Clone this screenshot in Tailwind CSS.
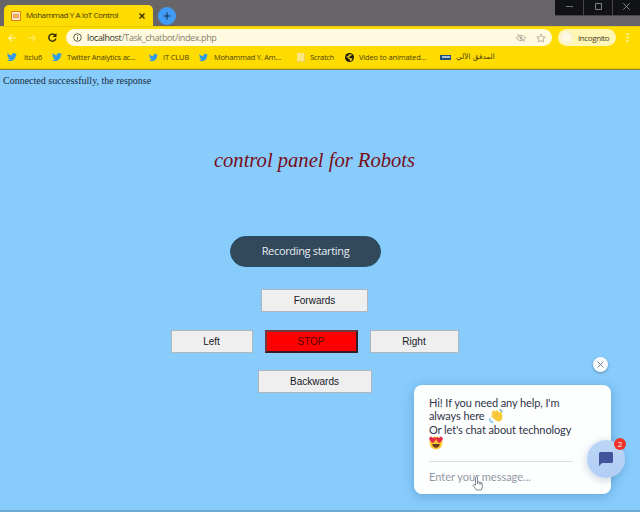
<!DOCTYPE html>
<html lang="en">
<head>
<meta charset="utf-8">
<title>Mohammad Y A IoT Control</title>
<script src="https://cdn.jsdelivr.net/npm/@tailwindcss/browser@4"></script>
</head>
<body class="w-[640px] h-[512px] overflow-hidden bg-[#88ccfc] font-['Open_Sans','Noto_Sans',sans-serif] flex flex-col">
<svg class="hidden">
  <symbol id="bird" viewBox="0 0 24 24"><path fill="#319be8" d="M24 4.6a10 10 0 0 1-2.8.8 5 5 0 0 0 2.1-2.7 10 10 0 0 1-3.1 1.2 4.9 4.9 0 0 0-8.4 4.5A14 14 0 0 1 1.7 3.1a4.9 4.9 0 0 0 1.5 6.6 5 5 0 0 1-2.2-.6 4.9 4.9 0 0 0 3.9 4.9 5 5 0 0 1-2.2.1 4.9 4.9 0 0 0 4.6 3.4A10 10 0 0 1 0 19.5 14 14 0 0 0 21.5 7.1 10 10 0 0 0 24 4.6z"/></symbol>
</svg>

<!-- Tab strip -->
<div class="h-[26px] shrink-0 bg-[#686569] flex justify-between">
  <div class="flex pl-[4px]">
    <div class="mt-[5px] w-[149px] h-[21px] bg-[#ffdc00] rounded-t-[5px] flex items-center pl-[7px]">
      <svg class="w-[10px] h-[10px] shrink-0" viewBox="0 0 10 10"><rect width="10" height="10" rx="1.5" fill="#e9781e"/><rect x="1" y="1" width="8" height="8" rx="1" fill="#fff3d9"/><path d="M2.900 2.600C4 2.600 4.200 4 5 4s1-1.400 2.100-1.400M2.900 7.400C4 7.400 4.200 6 5 6s1 1.400 2.100 1.400M2.700 3v4M7.300 3v4M3.500 5h3" fill="none" stroke="#e9781e" stroke-width="1"/></svg>
      <span class="ml-[5px] w-[113px] text-[8px] leading-[12px] -mt-px whitespace-nowrap text-[#3c3400] tracking-[-0.43px]"><span class="tracking-[-0.43px]">Mohammad Y A IoT Control</span></span>
      <svg class="w-[6px] h-[6px] shrink-0" viewBox="0 0 5 5"><path d="M.4.4l4.200 4.200M4.600.4L.4 4.600" stroke="#332c00" stroke-width="1.100"/></svg>
    </div>
    <div class="mt-[7px] ml-[5px] size-[18px] rounded-full bg-[#419bf4] flex items-center justify-center">
      <svg class="size-[8px]" viewBox="0 0 8 8"><path d="M4 .5v7M.5 4h7" stroke="#15395e" stroke-width="1.200"/></svg>
    </div>
  </div>
  <div class="w-[85px] h-[16px] grid grid-cols-[28px_28px_27px] gap-x-px bg-[#47464a] border-b border-[#47464a]">
    <div class="bg-[#101216] flex items-center justify-center"><svg class="size-[7px] mt-[-2px]" viewBox="0 0 7 7"><path d="M0 3.500h7" stroke="#707276"/></svg></div>
    <div class="bg-[#101216] flex items-center justify-center"><svg class="size-[7px] mt-[-2px]" viewBox="0 0 7 7"><path d="M.5.5h6v6h-6z" fill="none" stroke="#808286"/></svg></div>
    <div class="bg-[#101216] flex items-center justify-center"><svg class="size-[7px] mt-[-2px]" viewBox="0 0 7 7"><path d="M.3.3l6.400 6.400M6.700.3L.3 6.700" stroke="#909296" stroke-width=".9"/></svg></div>
  </div>
</div>

<!-- Toolbar -->
<div class="h-[22px] shrink-0 bg-[#ffdc00] flex items-center border-t border-[#e9ca06]">
  <svg class="ml-[8px] w-[8px] h-[8px]" viewBox="0 0 8 8"><path d="M8 4H1M4 .7L.7 4 4 7.300" fill="none" stroke="#fff7bd" stroke-width="1.100"/></svg>
  <svg class="ml-[12px] w-[8px] h-[8px]" viewBox="0 0 8 8"><path d="M0 4h7M4 .7L7.300 4 4 7.300" fill="none" stroke="#ffed7c" stroke-width="1"/></svg>
  <svg class="ml-[12px] w-[9px] h-[9px]" viewBox="0 0 9 9"><path d="M7.300 2.400A3.600 3.600 0 1 0 7.900 5.500" fill="none" stroke="#332c00" stroke-width="1.400"/><path d="M8.500 0v4h-4z" fill="#332c00"/></svg>
  <div class="ml-[9px] w-[486px] h-[17px] rounded-full bg-[#fffae0] flex items-center pl-[7px]">
    <svg class="size-[9px]" viewBox="0 0 9 9"><circle cx="4.500" cy="4.500" r="3.800" fill="none" stroke="#625e4f"/><path d="M4.500 4v2.700M4.500 2.200v1" stroke="#625e4f"/></svg>
    <span class="ml-[5px] w-[429px] text-[9px] leading-[14px] whitespace-nowrap tracking-[-0.37px] text-[#85806c]"><span class="text-[#35322a]">localhost</span>/Task_chatbot/index.php</span>
    <svg class="size-[10px]" viewBox="0 0 10 10"><path d="M.5 5C2.500 1.500 7.500 1.500 9.500 5 7.500 8.500 2.500 8.500.5 5zM1.500 1l7.500 8" fill="none" stroke="#b1ac9d"/><circle cx="5" cy="5" r="1.500" fill="#b1ac9d"/></svg>
    <svg class="ml-[10px] size-[10px]" viewBox="0 0 10 10"><path d="M5 1l1.200 2.700 3 .3L7 6l.6 3L5 7.500 2.400 9 3 6 .8 4l3-.3z" fill="none" stroke="#b1ac9d" stroke-width=".9"/></svg>
  </div>
  <div class="ml-[6px] w-[58px] h-[17px] rounded-full bg-[#fff5b5] flex items-center pl-[2px]">
    <svg class="size-[13px]" viewBox="0 0 13 13"><circle cx="6.500" cy="6.500" r="6.500" fill="#f9f3d3"/><path d="M2.500 6h8M4 5l1-2h3l1 2" fill="none" stroke="#fff"/><circle cx="4.500" cy="8.500" r="1.300" fill="none" stroke="#fff" stroke-width=".8"/><circle cx="8.500" cy="8.500" r="1.300" fill="none" stroke="#fff" stroke-width=".8"/></svg>
    <span class="ml-[5px] text-[8px] leading-[12px] text-[#454029] tracking-[-0.4px]">Incognito</span>
  </div>
  <svg class="ml-[10px] w-[3px] h-[9px]" viewBox="0 0 3 9"><path d="M.5 0h2v2h-2zM.5 3.500h2v2h-2zM.5 7h2v2h-2z" fill="#fff4a8"/></svg>
</div>

<!-- Bookmarks -->
<div class="h-[22px] shrink-0 bg-[#ffdc00] border-b border-[#8d8335] shadow-[inset_0_-1px_0_#e2c400] flex items-center pl-[7px] pb-[3px] text-[7.500px] leading-[12px] text-[#4a4000] whitespace-nowrap">
  <div class="w-[45px] flex items-center gap-[7px]"><svg class="size-[10px]"><use href="#bird"/></svg><span class="tracking-[-0.15px]">itclu6</span></div>
  <div class="w-[97px] flex items-center gap-[5px]"><svg class="size-[10px]"><use href="#bird"/></svg><span class="tracking-[-0.2px]">Twitter Analytics ac...</span></div>
  <div class="w-[50px] flex items-center gap-[5px]"><svg class="size-[9px]"><use href="#bird"/></svg><span class="tracking-[-0.15px]">IT CLUB</span></div>
  <div class="w-[98px] flex items-center gap-[6px]"><svg class="size-[9px]"><use href="#bird"/></svg><span class="tracking-[-0.2px]">Mohammad Y. Am...</span></div>
  <div class="w-[48px] flex items-center gap-[5px]"><span class="w-[8px] h-[9px] bg-[#fbe783] border-r border-b border-[#e9ce57] rounded-[1px]"></span><span class="tracking-[-0.25px]">Scratch</span></div>
  <div class="w-[95px] flex items-center gap-[5px]"><svg class="size-[9px]" viewBox="0 0 9 9"><circle cx="4.500" cy="4.500" r="4.500" fill="#211d00"/><path d="M1 3l2 .2.700-1.500L6 1l.8 1-1 1.300-2 .5 1 1.200 2.700.5-.8 2-1.700.7-.3-1.700L3 5.300z" fill="#e1c822"/></svg><span class="tracking-[-0.14px]">Video to animated...</span></div>
  <div class="flex items-center gap-[5px]"><span class="w-[11px] h-[5px] bg-[#1e4d7b] flex items-center justify-center"><span class="w-[8px] h-[2px] bg-[#a8c0d3]"></span></span><span dir="rtl" class="font-['DejaVu_Sans','Noto_Sans',sans-serif] text-[7.300px]">المدقق الآلي</span></div>
</div>

<!-- Page -->
<main class="relative flex-1 -mt-px border-b-2 border-[#70abd5]">
  <p class="pl-[3px] pt-[5px] font-['Liberation_Serif',serif] text-[10px] leading-[13px] text-[#172b3b] whitespace-nowrap">Connected successfully, the response</p>
  <h1 class="mt-[61px] pr-[11px] text-center font-['Liberation_Serif',serif] italic text-[20.600px] leading-[24px] text-[#790d1a]">control panel for Robots</h1>
  <div class="mt-[64px] ml-[230px] w-[151px] h-[31px] rounded-full bg-[#31495b] border border-[#284d67] flex items-center justify-center text-[11px] tracking-[-0.33px] text-[#e7edf4]">Recording starting</div>
  <div class="mt-[22px] w-[629px] flex flex-col items-center gap-[18px] font-['Liberation_Sans',sans-serif] text-[10px] leading-[12px] text-[#17171f]">
    <button class="w-[107px] h-[23px] bg-[#efeff0] border border-[#aeb7bf]">Forwards</button>
    <div class="flex gap-[12px]">
      <button class="w-[82px] h-[23px] bg-[#efeff0] border border-[#aeb7bf]">Left</button>
      <button class="w-[93px] h-[23px] bg-[#ff0000] border-2 border-t-[#74383f] border-l-[#74383f] border-r-[#351d25] border-b-[#351d25] text-[#570000]">STOP</button>
      <button class="w-[89px] h-[23px] bg-[#efeff0] border border-[#aeb7bf]">Right</button>
    </div>
    <button class="w-[114px] h-[23px] bg-[#efeff0] border border-[#aeb7bf] -mt-px">Backwards</button>
  </div>

  <!-- Chat widget -->
  <button class="absolute left-[593px] top-[288px] size-[15px] rounded-full bg-[#fafdff] shadow-[0_1px_3px_#0005] flex items-center justify-center"><svg class="size-[7px]" viewBox="0 0 7 7"><path d="M.5.5l6 6M6.500.5l-6 6" stroke="#6d737b" stroke-width=".9"/></svg></button>
  <section class="absolute left-[414px] top-[316px] w-[197px] h-[109px] rounded-[8px] bg-[#fdfefe] shadow-[0_2px_12px_#2068a066] pl-[15px] pt-[11px] font-['Lato','Open_Sans',sans-serif] text-[11px] tracking-[-0.1px] text-[#303448] whitespace-nowrap">
    <div class="leading-[13.400px]">
      <p>Hi! If you need any help, I'm</p>
      <p class="flex items-center">always here <svg class="ml-[4px] size-[14px] -my-px" viewBox="0 0 26 26"><path d="M5 7l3-2 6 7-8-8 3-2 8 8-5-6 3-2 6 7-1-5 3-1 2 12c0 7-6 10-11 7L3 13l3-2 5 5-7-8z" fill="#fac936"/><path d="M8 12l5 5M11 9l5 5M14 6l5 6" stroke="#e9b23c" stroke-width="1"/><path d="M19 1c3 0 5 2 6 5M1 17c0 4 3 7 7 8M2 21l3 4" fill="none" stroke="#68b7ea" stroke-width="2.200"/></svg></p>
      <p>Or let's chat about technology</p>
      <p class="h-[14px]"><svg class="size-[14px]" viewBox="0 0 26 26"><circle cx="13" cy="13" r="12" fill="#fcc933"/><path d="M7 13C0 9-1 4 2 2c2-1 4 0 5 2 2-2 5-2 6 0 0 4-3 7-6 9zM19 13c-3-2-6-5-6-9 1-2 4-2 6 0 1-2 3-3 5-2 3 2 2 7-5 11z" fill="#e42c46"/><path d="M6 15h14c0 9-14 9-14 0z" fill="#6a3e22"/></svg></p>
    </div>
    <div class="mt-[11px] w-[144px] h-px bg-[#d9dce0]"></div>
    <p class="mt-[8px] leading-[14px] tracking-normal text-[#9298a5]">Enter your message...</p>
  </section>
  <div class="absolute left-[587px] top-[371px] size-[38px] rounded-full bg-linear-to-b from-[#bcd6f7] to-[#b2cdf4] shadow-[0_2px_8px_#24588544] flex items-center justify-center"><svg class="size-[14px]" viewBox="0 0 14 14"><path d="M1.500 0h11a1.500 1.500 0 0 1 1.500 1.500v8a1.500 1.500 0 0 1-1.500 1.500H3l-3 3V1.500A1.500 1.500 0 0 1 1.500 0z" fill="#40539b"/></svg></div>
  <div class="absolute left-[614px] top-[369px] size-[12px] rounded-full bg-[#ee332b] text-white text-[8px] leading-[12px] text-center">2</div>
  <svg class="absolute left-[472px] top-[407px] w-[11px] h-[15px]" viewBox="0 0 11 15"><path d="M3.500 9V1.500q1-1.500 2 0V6q1-.8 1.700.2 1-.6 1.600.4 1.500-.4 1.500 1.200v3.200l-1.200 3H4.700L1 9.500q.5-1.800 2.500-.5zM5.500 6v2M7.200 6.400v2M8.800 6.800v2" fill="#fff" stroke="#636a76" stroke-width=".8"/></svg>
</main>
</body>
</html>
